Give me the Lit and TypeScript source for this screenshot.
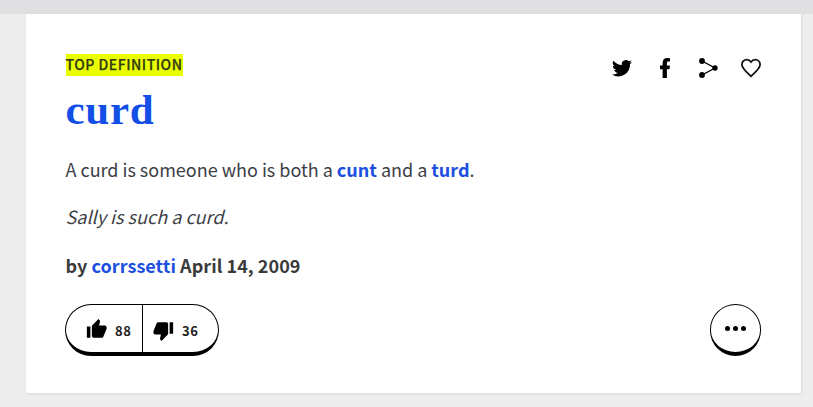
import { LitElement, html, css } from "lit";
import { customElement } from "lit/decorators.js";

@customElement("app-root")
export class AppRoot extends LitElement {
  static styles = css`
    :host {
      display: block;
      box-sizing: border-box;
      height: 407px;
      padding: 0 12.500px 0 25.500px;
      border-top: 14px solid #dfdfe1;
      background: #ededed;
      overflow: hidden;
      color: #3c4046;
      font-family: "Noto Sans CJK SC", "Noto Sans", sans-serif;
      font-size: 18px;
      line-height: 30px;
      white-space: nowrap;
    }
    * { box-sizing: border-box; }
    .card {
      height: 379px;
      padding: 40px 39.500px 0 40px;
      background: #fff;
      box-shadow: 1px 1px 2px #d9d9d9;
    }
    .top { display: flex; justify-content: space-between; align-items: flex-start; height: 22px; }
    .tag {
      height: 22px;
      line-height: 21px;
      background: #e9ff00;
      color: #33380f;
      font-size: 14px;
      font-weight: 500;
      letter-spacing: 0.52px;
      -webkit-text-stroke: 0.25px #33380f;
      width: 117.500px;
    }
    .share { display: flex; gap: 19px; padding-top: 2px; margin-right: -2px; }
    .share svg { display: block; width: 24px; height: 24px; }
    h1 {
      margin: 9px 0 0;
      height: 50px;
      color: #134fe7;
      font: bold 43px/50px "Liberation Serif", serif;
      letter-spacing: 0.7px;
    }
    p { margin: 0; height: 30px; }
    .meaning { margin-top: 19px; letter-spacing: -0.01px; }
    .example { margin-top: 17px; font-style: italic; letter-spacing: 0.02px; }
    .by { margin-top: 19px; font-weight: bold; color: #3a3a3a; letter-spacing: 0.04px; }
    a { color: #1d4fe0; font-weight: bold; }
    .actions { display: flex; justify-content: space-between; margin-top: 24px; margin-left: -0.500px; }
    .votes {
      display: flex;
      width: 154px;
      height: 52px;
      border: 1px solid #000;
      border-bottom-width: 4px;
      border-radius: 26px;
    }
    .vote {
      display: flex;
      align-items: center;
      gap: 7px;
      width: 76px;
      padding: 3px 0 0 20px;
      color: #222;
      font-size: 13px;
      font-weight: bold;
      letter-spacing: 0.6px;
    }
    .vote span { padding: 1px 0 0 1px; }
    .vote + .vote { border-left: 1px solid #000; padding-left: 10px; }
    .vote svg { width: 21px; height: 22px; }
    .vote:first-child svg { margin-top: -2px; }
    .vote + .vote svg { margin-top: 2px; }
    .more {
      display: flex;
      align-items: center;
      justify-content: center;
      gap: 3px;
      width: 51px;
      height: 52px;
      border: 1px solid #000;
      border-bottom-width: 4px;
      border-radius: 26px;
    }
    .dot { width: 5px; height: 5px; border-radius: 50%; background: #000; }
  `;

  render() {
    return html`
      <article class="card">
        <div class="top">
          <div class="tag">TOP DEFINITION</div>
          <div class="share">
            <svg viewBox="0 0 24 24"><path d="M22 5.900c-.7.300-1.500.5-2.300.6.8-.5 1.500-1.300 1.800-2.200-.8.5-1.600.8-2.600 1a4.100 4.100 0 0 0-7 3.700A11.700 11.700 0 0 1 3.400 4.700a4.100 4.100 0 0 0 1.300 5.500c-.7 0-1.300-.2-1.900-.5 0 2 1.400 3.700 3.300 4.100-.6.200-1.200.2-1.900.1.500 1.600 2 2.800 3.900 2.900A8.300 8.300 0 0 1 2 18.500 11.700 11.700 0 0 0 20 8c.8-.6 1.500-1.300 2-2.100z"/></svg>
            <svg viewBox="0 0 24 24"><path d="M9.600 22v-8.800H7V9.500h2.600V7c0-3.300 1.800-4.900 4.700-4.900l2.700.2v3.300h-1.500c-1.200 0-1.600.6-1.600 1.600v2.300h3.100l-.5 3.700h-2.600V22z"/></svg>
            <svg viewBox="0 0 24 24"><path d="M6 5l13 7L6 19" fill="none" stroke="#000" stroke-width="1.400"/><circle cx="6" cy="5" r="2.900"/><circle cx="19" cy="12" r="2.700"/><circle cx="6" cy="19" r="2.900"/></svg>
            <svg viewBox="0 0 24 24"><path d="M12 20.300l-1.200-1.100C6.200 15 2.900 12 2.900 8.500a4.800 4.800 0 0 1 4.800-4.800c1.700 0 3.300.8 4.300 2.200 1-1.400 2.600-2.200 4.300-2.200a4.800 4.800 0 0 1 4.800 4.800c0 3.500-3.300 6.500-7.900 10.700z" fill="none" stroke="#111" stroke-width="1.800"/></svg>
          </div>
        </div>
        <h1>curd</h1>
        <p class="meaning">A curd is someone who is both a <a>cunt</a> and a <a>turd</a>.</p>
        <p class="example">Sally is such a curd.</p>
        <p class="by">by <a>corrssetti</a> April 14, 2009</p>
        <div class="actions">
          <div class="votes">
            <div class="vote">
              <svg viewBox="0 0 24 24"><path d="M1 22h4V9H1zM23.500 10a2 2 0 0 0-2-2H15l1-4.600v-.3c0-.4-.2-.8-.4-1.100L14.200 .5 7.300 7.600C6.900 8 6.700 8.500 6.700 9v11a2 2 0 0 0 2 2H18c.8 0 1.500-.5 1.800-1.200l3.400-8.100c.2-.2.300-.4.300-.7z"/></svg>
              <span>88</span>
            </div>
            <div class="vote">
              <svg viewBox="0 0 24 24"><path d="M15.300 2H6c-.8 0-1.500.5-1.800 1.200L.8 11.300c-.2.200-.3.400-.3.700v2a2 2 0 0 0 2 2H9l-1 4.600v.3c0 .4.200.8.400 1.100l1.400 1.500 6.900-7.100c.4-.4.600-.9.600-1.400V4a2 2 0 0 0-2-2zM19 2v13h4V2z"/></svg>
              <span>36</span>
            </div>
          </div>
          <div class="more"><i class="dot"></i><i class="dot"></i><i class="dot"></i></div>
        </div>
      </article>
    `;
  }
}
